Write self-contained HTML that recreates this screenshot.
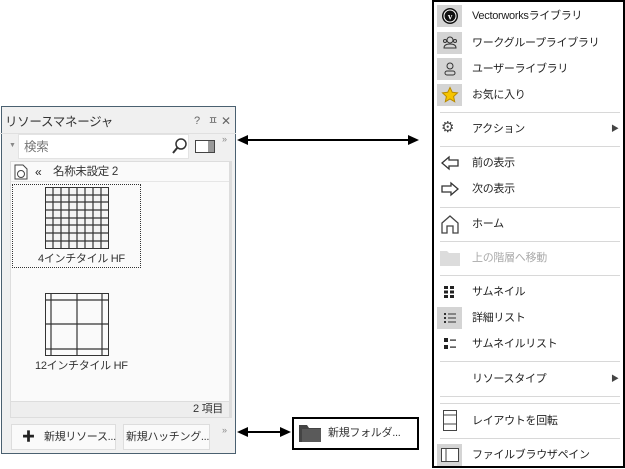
<!DOCTYPE html>
<html><head><meta charset="utf-8"><style>
*{margin:0;padding:0;box-sizing:border-box}
body{width:625px;height:469px;background:#fff;position:relative;overflow:hidden;font-family:"Liberation Sans","Noto Sans CJK JP",sans-serif;font-size:11px;letter-spacing:-0.3px;color:#222}
.a{position:absolute;white-space:nowrap}
.t{position:absolute;white-space:nowrap;line-height:16px}
.sep{position:absolute;left:440px;width:180px;height:1px;background:#d8d8d8}
.ib{position:absolute;left:437px;width:25px;height:22px;background:#d4d4d4}
</style></head><body>
<!-- left panel -->
<div class="a" style="left:1px;top:106px;width:235px;height:348px;border:1px solid #4a6070;background:#f0f0f0"></div>
<div class="t" style="left:5px;top:114px;font-size:12.5px;color:#333">リソースマネージャ</div>
<div class="t" style="left:194px;top:113px;color:#666;font-size:11px">?</div>
<div class="t" style="left:208px;top:113px;color:#666;font-size:11px">ㅍ</div>
<div class="t" style="left:221px;top:113px;color:#666;font-size:12px">✕</div>
<div class="a" style="left:0;top:133px;width:236px;height:1px;background:#e0e0e0"></div>
<div class="t" style="left:9px;top:138px;font-size:7px;color:#888">▼</div>
<div class="a" style="left:18px;top:134px;width:171px;height:25px;background:#fff;border:1px solid #e3e3e3"></div>
<div class="t" style="left:24px;top:139px;font-size:12.5px;color:#777">検索</div>
<svg class="a" style="left:171px;top:138px" width="16" height="18"><circle cx="10" cy="6" r="5" fill="none" stroke="#333" stroke-width="1.5"/><line x1="6.5" y1="9.5" x2="2" y2="15" stroke="#333" stroke-width="2"/></svg>
<div class="a" style="left:195px;top:140px;width:20px;height:13px;border:1.5px solid #444;background:#fff"><div style="position:absolute;right:0;top:0;width:6px;height:100%;background:#999"></div></div>
<div class="t" style="left:222px;top:131px;font-size:9px;color:#888">»</div>
<div class="a" style="left:10px;top:161px;width:220px;height:257px;background:#fafafa;border:1px solid #ddd"></div>
<div class="a" style="left:230px;top:161px;width:2px;height:257px;background:#ddd"></div>
<svg class="a" style="left:14px;top:164px" width="14" height="16"><path d="M1 1h8l4 4v10H1z" fill="#fff" stroke="#444"/><circle cx="7" cy="10" r="3.5" fill="none" stroke="#444"/></svg>
<div class="t" style="left:35px;top:164px;font-size:12px">«</div>
<div class="t" style="left:53px;top:164px;font-size:11.5px;color:#333">名称未設定 2</div>
<div class="a" style="left:11px;top:181px;width:218px;height:1px;background:#e6e6e6"></div>
<div class="a" style="left:12px;top:184px;width:129px;height:84px;border:1px dotted #333"></div>
<svg class="a" style="left:45px;top:187px" width="64" height="62">
<rect x="0.5" y="0.5" width="63" height="61" fill="#f4f4f4" stroke="#333"/>
<g stroke="#333" stroke-width="1.2">
<line x1="8" y1="0" x2="8" y2="62"/><line x1="16" y1="0" x2="16" y2="62"/><line x1="24" y1="0" x2="24" y2="62"/><line x1="32" y1="0" x2="32" y2="62"/><line x1="40" y1="0" x2="40" y2="62"/><line x1="48" y1="0" x2="48" y2="62"/><line x1="56" y1="0" x2="56" y2="62"/>
<line y1="8" x1="0" y2="8" x2="64"/><line y1="15" x1="0" y2="15" x2="64"/><line y1="23" x1="0" y2="23" x2="64"/><line y1="31" x1="0" y2="31" x2="64"/><line y1="38" x1="0" y2="38" x2="64"/><line y1="46" x1="0" y2="46" x2="64"/><line y1="54" x1="0" y2="54" x2="64"/>
</g></svg>
<div class="t" style="left:38px;top:251px;color:#333">4インチタイル HF</div>
<svg class="a" style="left:45px;top:293px" width="64" height="63">
<rect x="0.5" y="0.5" width="63" height="62" fill="#fafafa" stroke="#333"/>
<g stroke="#333" stroke-width="1.2">
<line x1="6" y1="0" x2="6" y2="63"/><line x1="32" y1="0" x2="32" y2="63"/><line x1="57" y1="0" x2="57" y2="63"/>
<line y1="7" x1="0" y2="7" x2="64"/><line y1="31" x1="0" y2="31" x2="64"/><line y1="56" x1="0" y2="56" x2="64"/>
</g></svg>
<div class="t" style="left:35px;top:358px;color:#333">12インチタイル HF</div>
<div class="a" style="left:11px;top:401px;width:218px;height:16px;background:#eee;border-top:1px solid #ddd"></div>
<div class="t" style="left:193px;top:401px;color:#333">2 項目</div>
<div class="a" style="left:11px;top:424px;width:105px;height:26px;background:#fafafa;border:1px solid #ddd"></div>
<div class="t" style="left:22px;top:429px;font-size:13px;font-weight:bold">✚</div>
<div class="t" style="left:44px;top:429px;color:#333">新規リソース...</div>
<div class="a" style="left:123px;top:424px;width:87px;height:26px;background:#fafafa;border:1px solid #ddd"></div>
<div class="t" style="left:126px;top:429px;color:#333">新規ハッチング...</div>
<div class="t" style="left:222px;top:422px;font-size:9px;color:#888">»</div>
<!-- arrows -->
<svg class="a" style="left:236px;top:132px" width="185" height="16"><line x1="8" y1="8" x2="176" y2="8" stroke="#000" stroke-width="2"/><path d="M1 8l11-5v10zM183 8l-11-5v10z" fill="#000"/></svg>
<svg class="a" style="left:236px;top:424px" width="56" height="16"><line x1="8" y1="8" x2="48" y2="8" stroke="#000" stroke-width="2"/><path d="M1 8l11-5v10zM55 8l-11-5v10z" fill="#000"/></svg>
<div class="a" style="left:292px;top:417px;width:127px;height:33px;border:2px solid #000;background:#fff"></div>
<svg class="a" style="left:298px;top:423px" width="25" height="20"><path d="M1 2h8l2 3h12v14H1z" fill="#444"/><rect x="4" y="6" width="19" height="13" fill="#5a5a5a"/></svg>
<div class="t" style="left:328px;top:425px;color:#333">新規フォルダ...</div>
<!-- menu -->
<div class="a" style="left:432px;top:0;width:193px;height:468px;border:2px solid #000;background:#fff"></div>
<div class="ib" style="top:5px"></div>
<svg class="a" style="left:441px;top:7px" width="18" height="18"><circle cx="9" cy="9" r="8" fill="#111"/><circle cx="9" cy="9" r="6" fill="none" stroke="#fff" stroke-width="1"/><text x="9" y="12.5" font-size="9" font-weight="bold" fill="#fff" text-anchor="middle" font-family="Liberation Serif">v</text></svg>
<div class="t" style="left:472px;top:8px">Vectorworksライブラリ</div>
<div class="ib" style="top:32px"></div>
<svg class="a" style="left:441px;top:34px" width="18" height="18"><circle cx="9" cy="6" r="3" fill="none" stroke="#333"/><path d="M3 14c0-3 3-4 6-4s6 1 6 4z" fill="none" stroke="#333"/><circle cx="4" cy="7" r="1.5" fill="none" stroke="#333"/><circle cx="14" cy="7" r="1.5" fill="none" stroke="#333"/></svg>
<div class="t" style="left:472px;top:35px">ワークグループライブラリ</div>
<div class="ib" style="top:58px"></div>
<svg class="a" style="left:441px;top:60px" width="18" height="18"><circle cx="9" cy="6" r="3" fill="none" stroke="#333"/><rect x="4" y="11" width="10" height="4" rx="2" fill="none" stroke="#333"/></svg>
<div class="t" style="left:472px;top:61px">ユーザーライブラリ</div>
<div class="ib" style="top:84px"></div>
<svg class="a" style="left:441px;top:86px" width="18" height="18"><path d="M9 1.5l2.3 4.8 5.2.6-3.9 3.6 1.1 5.2L9 13l-4.7 2.7 1.1-5.2L1.5 6.9l5.2-.6z" fill="#f5c400" stroke="#b88a00"/></svg>
<div class="t" style="left:472px;top:87px">お気に入り</div>
<div class="sep" style="top:112px"></div>
<div class="t" style="left:441px;top:120px;font-size:15px;color:#444">⚙</div>
<div class="t" style="left:472px;top:121px">アクション</div>
<div class="t" style="left:611px;top:121px;font-size:8px;color:#444">▶</div>
<div class="sep" style="top:146px"></div>
<svg class="a" style="left:441px;top:155px" width="18" height="16"><path d="M1 8l7-6v3h9v6H8v3z" fill="none" stroke="#333" stroke-width="1.3"/></svg>
<div class="t" style="left:472px;top:155px">前の表示</div>
<svg class="a" style="left:441px;top:181px" width="18" height="16"><path d="M17 8l-7-6v3H1v6h9v3z" fill="none" stroke="#333" stroke-width="1.3"/></svg>
<div class="t" style="left:472px;top:181px">次の表示</div>
<div class="sep" style="top:207px"></div>
<svg class="a" style="left:441px;top:214px" width="18" height="20"><path d="M1 9l8-7 8 7v10h-5v-7H6v7H1z" fill="none" stroke="#444" stroke-width="1.3"/></svg>
<div class="t" style="left:472px;top:216px">ホーム</div>
<div class="sep" style="top:241px"></div>
<svg class="a" style="left:439px;top:249px" width="22" height="18"><path d="M1 2h7l2 2h11v13H1z" fill="#dcdcdc"/></svg>
<div class="t" style="left:472px;top:250px;color:#aaa">上の階層へ移動</div>
<div class="sep" style="top:275px"></div>
<svg class="a" style="left:443px;top:285px" width="14" height="14"><g fill="#222"><rect x="1" y="1" width="4" height="3"/><rect x="7" y="1" width="4" height="3"/><rect x="1" y="5.5" width="4" height="3"/><rect x="7" y="5.5" width="4" height="3"/><rect x="1" y="10" width="4" height="3"/><rect x="7" y="10" width="4" height="3"/></g></svg>
<div class="t" style="left:472px;top:284px">サムネイル</div>
<div class="ib" style="top:307px"></div>
<svg class="a" style="left:443px;top:312px" width="14" height="12"><g fill="#333"><rect x="1" y="1" width="2" height="2"/><rect x="5" y="1.5" width="8" height="1"/><rect x="1" y="5" width="2" height="2"/><rect x="5" y="5.5" width="8" height="1"/><rect x="1" y="9" width="2" height="2"/><rect x="5" y="9.5" width="8" height="1"/></g></svg>
<div class="t" style="left:472px;top:310px">詳細リスト</div>
<svg class="a" style="left:443px;top:337px" width="14" height="14"><g fill="#222"><rect x="1" y="1" width="4" height="4"/><rect x="7" y="2.5" width="6" height="1.2"/><rect x="1" y="8" width="4" height="4"/><rect x="7" y="9.5" width="6" height="1.2"/></g></svg>
<div class="t" style="left:472px;top:336px">サムネイルリスト</div>
<div class="sep" style="top:361px"></div>
<div class="t" style="left:472px;top:371px">リソースタイプ</div>
<div class="t" style="left:611px;top:371px;font-size:8px;color:#444">▶</div>
<div class="sep" style="top:396px"></div>
<div class="sep" style="top:403px"></div>
<svg class="a" style="left:443px;top:410px" width="14" height="22"><rect x="0.5" y="0.5" width="13" height="20" fill="#fff" stroke="#444"/><line x1="0" y1="5" x2="14" y2="5" stroke="#444"/><line x1="0" y1="14" x2="14" y2="14" stroke="#444"/></svg>
<div class="t" style="left:472px;top:413px">レイアウトを回転</div>
<div class="sep" style="top:438px"></div>
<div class="a" style="left:437px;top:444px;width:25px;height:22px;background:#d4d4d4"></div>
<svg class="a" style="left:441px;top:448px" width="18" height="14"><rect x="0.5" y="0.5" width="17" height="13" fill="#fff" stroke="#444"/><line x1="5" y1="0" x2="5" y2="14" stroke="#444"/></svg>
<div class="t" style="left:472px;top:447px">ファイルブラウザペイン</div>
</body></html>
